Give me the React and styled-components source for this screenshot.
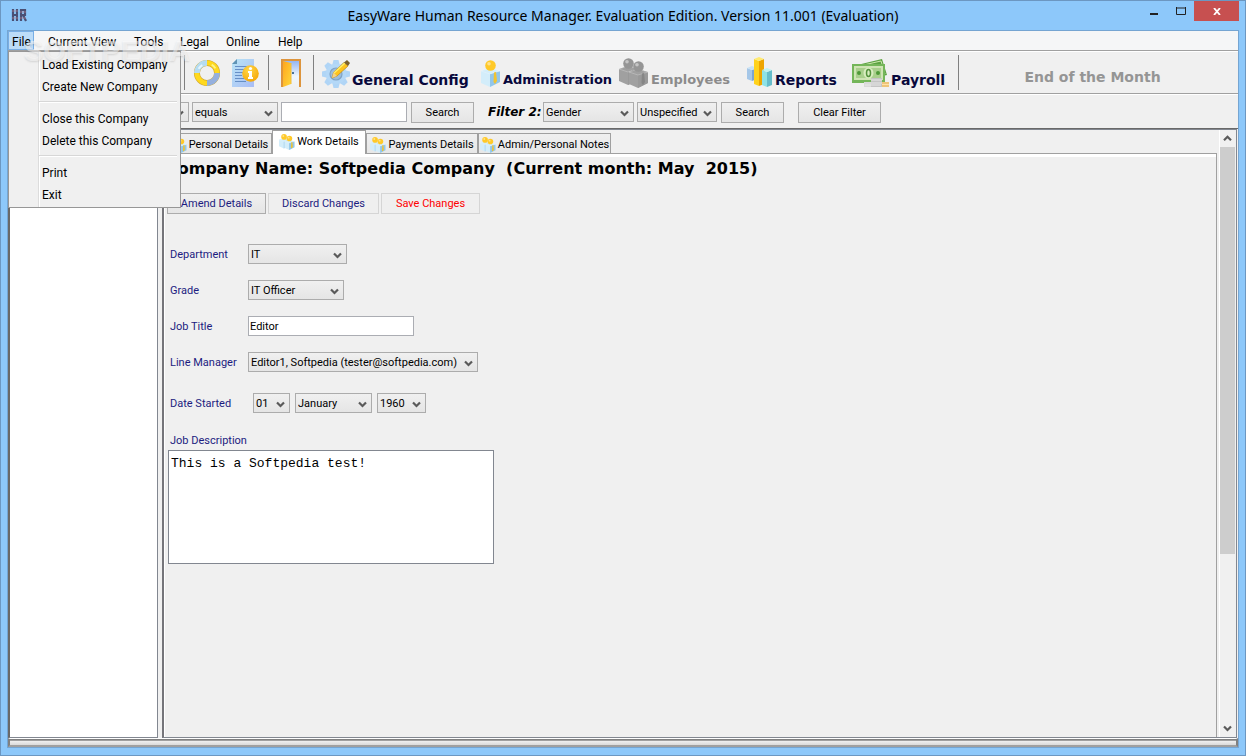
import React from 'react';
import styled, { createGlobalStyle, css } from 'styled-components';

const GlobalStyle = createGlobalStyle`
  * {
    box-sizing: border-box;
  }
  html, body, #root {
    height: 100%;
    margin: 0;
  }
  body {
    font-family: Roboto, "Noto Sans", sans-serif;
    font-size: 11px;
    color: #000;
  }
  button, input, select, textarea {
    font: inherit;
    color: inherit;
    margin: 0;
    border-radius: 0;
  }
`;

/* window frame */

const Window = styled.div`
  display: flex;
  flex-direction: column;
  min-height: 100%;
  padding: 0 6px 7px;
  border: 1px solid #6c97c1;
  background: #8dc8fa;
`;

const TitleBar = styled.header`
  display: grid;
  grid-template-columns: 120px 1fr 120px;
  height: 29px;
  flex: none;
`;

const AppIcon = styled.svg`
  width: 16px;
  height: 14px;
  margin: 7px 0 0 4px;
`;

const WindowTitle = styled.h1`
  margin: 0;
  font-family: "Noto Sans", "Open Sans", sans-serif;
  font-size: 14px;
  font-weight: 400;
  line-height: 30px;
  text-align: center;
  white-space: nowrap;
`;

const Caption = styled.div`
  display: flex;
  justify-content: flex-end;
  align-items: flex-start;
`;

const CaptionButton = styled.button`
  display: flex;
  align-items: center;
  justify-content: center;
  width: ${props => (props.$close ? '45px' : '27px')};
  height: 20px;
  padding: 0;
  border: 0;
  background: ${props => (props.$close ? '#c75050' : 'transparent')};
`;

const Client = styled.div`
  position: relative;
  display: flex;
  flex-direction: column;
  flex: 1;
  border: 1px solid #75a5d2;
  background: #f0f0f0;
`;

/* menu */

const MenuBar = styled.nav`
  position: relative;
  display: flex;
  height: 20px;
  background: #f5f6f7;
  border-bottom: 1px solid #a0a0a0;
  font-size: 12px;
`;

const MenuButton = styled.button`
  width: ${props => props.$width}px;
  height: 19px;
  padding: 1px 0 0 3px;
  border: 1px solid ${props => (props.$open ? '#78aee5' : 'transparent')};
  background: ${props => (props.$open ? '#bcdcf8' : 'transparent')};
  line-height: 18px;
  text-align: left;
  white-space: nowrap;

  &:first-child {
    margin-right: 10px;
  }
`;

const DropMenu = styled.div`
  position: absolute;
  z-index: 2;
  top: 20px;
  left: 0;
  width: 173px;
  padding: 2px 0 1px;
  border: 1px solid #979797;
  background: linear-gradient(90deg, transparent 29px, #dcdcdc 29px, #dcdcdc 30px, #fff 30px, #fff 31px, transparent 31px) #f0f0f0;
  font-size: 12px;
`;

const DropItem = styled.button`
  display: block;
  width: 100%;
  height: 22px;
  padding: 0 0 0 33px;
  border: 0;
  background: transparent;
  line-height: 22px;
  text-align: left;
  white-space: nowrap;
`;

const DropRule = styled.hr`
  height: 2px;
  margin: 3px 3px 5px 30px;
  border: 0;
  border-top: 1px solid #d7d7d7;
  background: #fff;
`;

const Watermark = styled.div`
  position: absolute;
  z-index: 3;
  top: 4px;
  left: 16px;
  color: rgba(255, 255, 255, 0.5);
  font-family: "Liberation Sans", sans-serif;
  font-size: 29px;
  font-weight: 700;
  line-height: 32px;
  text-shadow: 0 1px 2px rgba(100, 100, 100, 0.2);
  pointer-events: none;
`;

/* toolbar */

const Toolbar = styled.div`
  display: flex;
  align-items: center;
  height: 43px;
  padding-left: 176px;
  border-top: 1px solid #fff;
  border-bottom: 1px solid #a0a0a0;
`;

const Divider = styled.i`
  flex: none;
  width: 1px;
  height: 35px;
  margin-right: 8px;
  background: #808080;
`;

const IconButton = styled.button`
  display: flex;
  align-items: center;
  justify-content: center;
  flex: none;
  width: ${props => props.$width}px;
  height: 36px;
  padding: 0;
  border: 0;
  background: transparent;
`;

const ToolButton = styled.button`
  display: flex;
  align-items: flex-end;
  flex: none;
  width: ${props => props.$width}px;
  height: 38px;
  padding: 0 0 3px;
  border: 0;
  background: transparent;
  color: ${props => (props.disabled ? '#8b8b8b' : '#08083c')};
  font-family: "DejaVu Sans", sans-serif;
  font-size: ${props => (props.$small ? '13px' : '14px')};
  font-weight: 700;
  line-height: 18px;
  white-space: nowrap;

  svg {
    flex: none;
    margin-right: 2px;
    margin-bottom: 1px;
  }
`;

const MonthButton = styled.button`
  flex: 1;
  padding: 8px 20px 0 0;
  border: 0;
  background: transparent;
  color: #959595;
  font-family: "DejaVu Sans", sans-serif;
  font-size: 14px;
  font-weight: 700;
`;

/* controls */

const face = css`
  border: 1px solid #acacac;
  background: linear-gradient(#f0f0f0, #e5e5e5);
`;

const SelectBox = styled.span`
  position: relative;
  display: inline-flex;
  flex: none;
  width: ${props => props.$width}px;
  height: 20px;

  select {
    ${face}
    appearance: none;
    width: 100%;
    height: 20px;
    padding: 1px 0 0 2px;
    line-height: 17px;
  }

  svg {
    position: absolute;
    right: 5px;
    top: 8px;
    pointer-events: none;
  }
`;

const TextInput = styled.input`
  width: ${props => props.$width}px;
  height: 20px;
  padding: 0 1px;
  border: 1px solid #abadb3;
  background: #fff;
`;

const Button = styled.button`
  ${face}
  width: ${props => props.$width}px;
  height: 21px;
  padding: 0;
  line-height: 19px;
  white-space: nowrap;
`;

const FilterBar = styled.form`
  display: flex;
  align-items: center;
  height: 34px;
  padding: 1px 0 0 91px;
  border-top: 1px solid #fff;
`;

const FilterGroup = styled.div`
  display: flex;
  align-items: center;
  gap: 3px;
  margin-right: 14px;

  ${Button} {
    margin-left: 1px;
  }
`;

const FilterLabel = styled.strong`
  width: 52px;
  font-family: "DejaVu Sans", sans-serif;
  font-size: 12px;
  font-style: italic;
  white-space: nowrap;
`;

/* body */

const Workspace = styled.main`
  display: flex;
  flex: 1;
  border-top: 1px solid #696969;
`;

const Sidebar = styled.aside`
  flex: none;
  width: 150px;
  border: 1px solid #828790;
  border-left: 2px solid #696969;
  background: #fff;
`;

const Pane = styled.section`
  display: flex;
  flex: 1;
  min-width: 0;
  margin: 0 1px 0 4px;
  border: 1px solid #828790;
  border-left: 2px solid #75757a;
`;

const Content = styled.div`
  display: flex;
  flex-direction: column;
  flex: 1;
  min-width: 0;
  padding-left: 1px;
  border-left: 1px solid #fff;
`;

const TabStrip = styled.div`
  display: flex;
  align-items: flex-end;
  height: 23px;
  padding-left: 1px;
`;

const Tab = styled.button`
  display: flex;
  align-items: center;
  justify-content: center;
  gap: 2px;
  flex: none;
  position: relative;
  width: ${props => props.$width}px;
  height: 20px;
  padding: 2px 0 0;
  border: 1px solid #a0a0a0;
  border-width: 1px 1px 0;
  background: linear-gradient(#f0f0f0, #e7e7e7);
  line-height: 18px;
  white-space: nowrap;

  svg {
    flex: none;
  }

  ${props => props.$active && css`
    height: 24px;
    margin-bottom: -1px;
    padding: 0 0 1px;
    background: #fff;
  `}
`;

const TabPage = styled.div`
  flex: 1;
  padding: 0 0 20px;
  margin-right: 2px;
  border: 1px solid #a0a0a0;
  border-width: 1px 1px 0 0;
  box-shadow: inset 0 3px 0 #fff;
`;

const CompanyTitle = styled.h2`
  margin: 0;
  padding: 3px 0 0;
  font-family: "DejaVu Sans", sans-serif;
  font-size: 16px;
  font-weight: 700;
  line-height: 24px;
  white-space: pre;
`;

const Actions = styled.div`
  display: flex;
  gap: 2px;
  margin: 12px 0 30px 1px;
`;

const ActionButton = styled(Button)`
  color: ${props => (props.$danger ? '#f00' : '#1c1c80')};
  ${props => props.$flat && css`
    border-color: #d5d5d5;
    background: #efefef;
  `}
`;

const Field = styled.div`
  display: flex;
  align-items: center;
  height: 20px;
  margin: 0 0 16px 4px;

  > label {
    width: 78px;
    color: #1c1c80;
  }
`;

const DateField = styled(Field)`
  gap: 5px;
  margin: 21px 0 18px 4px;
`;

const Description = styled.div`
  display: flex;
  flex-direction: column;
  align-items: flex-start;
  margin-left: 2px;

  label {
    padding: 1px 0 0 2px;
    color: #1c1c80;
    line-height: 18px;
  }

  textarea {
    width: 326px;
    height: 114px;
    padding: 5px 2px;
    border: 1px solid #828790;
    background: #fff;
    font-family: "Liberation Mono", monospace;
    font-size: 13px;
    line-height: 15px;
    resize: none;
  }
`;

const ScrollBar = styled.div`
  display: flex;
  flex-direction: column;
  flex: none;
  width: 17px;
  border-left: 1px solid #fff;

  button {
    display: flex;
    align-items: center;
    justify-content: center;
    width: 15px;
    height: 17px;
    padding: 0;
    border: 0;
    background: transparent;
  }
`;

const Track = styled.div`
  flex: 1;
`;

const Thumb = styled.div`
  width: 15px;
  height: 71%;
  background: #cdcdcd;
`;

const StatusBar = styled.footer`
  height: 9px;
  border: 2px solid #808080;
  border-top: 1px solid #fff;
  border-bottom-color: #a0a0a0;
  background: linear-gradient(#808080 1px, #a0a0a0 1px, #a0a0a0 2px, #f0f0f0 2px, #dadada);
`;

/* icons */

const Chevron = ({ up }) => (
  <svg width={9} height={7} viewBox="0 0 9 7">
    <path
      d={up ? 'M1 5.2 4.5 1.7 8 5.2' : 'M1 1.5 4.5 5 8 1.5'}
      fill="none"
      stroke="#5a5a5a"
      strokeWidth="2.2"
    />
  </svg>
);

const RingIcon = () => (
  <svg width={30} height={30} viewBox="0 0 30 30">
    <circle cx="15" cy="15" r="10.800" fill="none" stroke="#d0a630" strokeWidth="6.400" />
    <circle cx="15" cy="15" r="10.800" fill="none" stroke="#ffd91e" strokeWidth="5.200" />
    <g fill="none" strokeWidth="6">
      <path d="M4.200 15A10.800 10.800 0 0 1 15 4.200" stroke="#b5dcf2" />
      <path d="M25.800 15A10.800 10.800 0 0 1 15 25.800" stroke="#95b0de" />
    </g>
    <path d="M6 10.500a10.300 10.300 0 0 1 4-4" fill="none" stroke="#e6f6fd" strokeWidth="2" />
    <path d="M20 6a10.300 10.300 0 0 1 4 4" fill="none" stroke="#fff385" strokeWidth="2" />
  </svg>
);

const ReportIcon = () => (
  <svg width={30} height={32} viewBox="0 0 30 32">
    <defs>
      <linearGradient id="sheet" x1="0" y1="0" x2="1" y2="1">
        <stop offset="0" stopColor="#b9e4f5" />
        <stop offset="1" stopColor="#a9bdf6" />
      </linearGradient>
      <radialGradient id="badge" cx=".4" cy=".3" r=".8">
        <stop offset="0" stopColor="#ffd84a" />
        <stop offset="1" stopColor="#f5a300" />
      </radialGradient>
    </defs>
    <path d="M7 2H24V30H2V7Z" fill="url(#sheet)" />
    <path d="M2 7 7 2V7Z" fill="#5f93b5" />
    <path d="M5 9.500H19M5 12.500H17M5 15.500H13M5 18.500H12M5 21.500H14M5 24.500H16" stroke="#668fc6" />
    <circle cx="20.500" cy="16.500" r="8.300" fill="url(#badge)" />
    <path d="M18 14h4v6h1v2h-5v-2h1v-4h-1z" fill="#fff" />
    <circle cx="20.500" cy="11.500" r="1.600" fill="#fff" />
  </svg>
);

const DoorIcon = () => (
  <svg width={24} height={32} viewBox="0 0 24 32">
    <defs>
      <linearGradient id="sky" x1="0" y1="0" x2="0" y2="1">
        <stop offset="0" stopColor="#8fb2f0" />
        <stop offset=".6" stopColor="#eef6fd" />
        <stop offset="1" stopColor="#f0f0f0" />
      </linearGradient>
      <linearGradient id="leaf" x1="0" y1="0" x2="1" y2="1">
        <stop offset="0" stopColor="#ffa51e" />
        <stop offset="1" stopColor="#ffd83a" />
      </linearGradient>
    </defs>
    <path d="M3 30V3H21V30" fill="url(#sky)" stroke="#dd943c" strokeWidth="2" />
    <path d="M4 4 12 6V27L4 30Z" fill="url(#leaf)" />
    <path d="M12 6V27" stroke="#f0bd3c" />
    <path d="M13 16h2" stroke="#48719a" strokeWidth="2" />
  </svg>
);

const teeth = [0, 45, 90, 135, 180, 225, 270, 315];

const GearIcon = () => (
  <svg width={28} height={30} viewBox="0 0 28 30">
    <g fill="#b0d5f6">
      {teeth.map(angle => (
        <path key={angle} d="M11.500 2h5l1.500 6h-8z" transform={`rotate(${angle} 14 16)`} />
      ))}
    </g>
    <circle cx="14" cy="16" r="10.200" fill="#b4d8f7" />
    <circle cx="14" cy="16" r="6" fill="#9dbddb" stroke="#7fa3c6" strokeWidth="1.200" />
    <path d="M10 20 11.500 14.500 22 4.500 26 8 15 18Z" fill="#ffc31d" stroke="#c78d16" strokeWidth=".7" />
    <path d="M12 15 23 5" stroke="#fff06a" strokeWidth="1.500" />
    <path d="M22 4.500 25 2 28 5 26 8Z" fill="#7b602b" />
    <path d="M10 20 11.500 14.500 15 18Z" fill="#f2d28d" />
  </svg>
);

const Person = ({ x = 0, y = 0, head = '#ffc928', body = '#d3edfa', side = '#92c6ea', tie = '#f0c331' }) => (
  <g transform={`translate(${x} ${y})`}>
    <path d="M0 11 9 8 19 11V22L9 27 0 23Z" fill={body} />
    <path d="M9 14 19 11V22L9 27Z" fill={side} />
    <path d="M0 11 9 8 19 11 9 14Z" fill={body} stroke="#fff" strokeOpacity=".4" strokeWidth=".6" />
    <path d="M13 12.500 15 12 16 21 14 24 12.500 22Z" fill={tie} />
    <circle cx="9.500" cy="5.500" r="5.300" fill={head} />
    <circle cx="8" cy="3.800" r="1.800" fill="#fff" fillOpacity=".45" />
  </g>
);

const AdminIcon = () => (
  <svg width={20} height={28} viewBox="0 0 20 28">
    <Person />
  </svg>
);

const gray = { head: '#959595', body: '#a0a0a0', side: '#999', tie: '#868686' };

const EmployeesIcon = () => (
  <svg width={30} height={30} viewBox="0 0 30 30">
    <Person {...gray} />
    <Person {...gray} x={10} y={3} />
  </svg>
);

const TabIcon = () => (
  <svg width={16} height={16} viewBox="0 0 30 30">
    <Person />
    <Person x={10} y={3} />
  </svg>
);

const bars = [
  { x: 0, y: 11, h: 11, top: '#c6e2f6', left: '#a5c7e8', right: '#7ca5cf' },
  { x: 7, y: 2, h: 25, top: '#ffeb70', left: '#ffd21c', right: '#eea500' },
  { x: 15, y: 13, h: 15, top: '#bff2f2', left: '#8ee2e6', right: '#66bccb' },
];

const ReportsIcon = () => (
  <svg width={26} height={31} viewBox="0 0 26 31">
    {bars.map(bar => (
      <g key={bar.x}>
        <path d={`M${bar.x} ${bar.y}l5 2v${bar.h}l-5-2z`} fill={bar.left} />
        <path d={`M${bar.x + 5} ${bar.y + 2}l5-2v${bar.h}l-5 2z`} fill={bar.right} />
        <path d={`M${bar.x} ${bar.y}l5-2 5 2-5 2z`} fill={bar.top} />
      </g>
    ))}
  </svg>
);

const MoneyIcon = () => (
  <svg width={38} height={30} viewBox="0 0 38 30">
    <path d="M2 8 31 1 36 17 6 24Z" fill="#5da342" />
    <path d="M8 8 30 3 34 16" fill="none" stroke="#cde7ae" />
    <path d="M1 6H34V25H1Z" fill="#74b659" />
    <path d="M3 8H32V22H3Z" fill="#cfe4b4" />
    <path d="M5 10H30V20H5Z" fill="#a9cf8c" />
    <ellipse cx="17.500" cy="15" rx="5" ry="5.500" fill="#d8edbf" />
    <ellipse cx="17.500" cy="15" rx="2" ry="3.500" fill="none" stroke="#54933c" strokeWidth="1.500" />
    <circle cx="8" cy="15" r="2" fill="#4f9938" />
    <circle cx="27" cy="15" r="2" fill="#4f9938" />
    <path d="M13 24h8v5h-8z" fill="#dadada" />
    <path d="M20 20h11v9H20z" fill="#c4c4c4" />
    <path d="M20 22h11M20 25h11M14 27h16" stroke="#e8e8e8" />
    <path d="M31 24h7v5h-7z" fill="#eec47a" />
    <path d="M31 26.500h7" stroke="#ffe2a6" />
  </svg>
);

const menus = [
  { title: 'File', width: 26, open: true },
  { title: 'Current View', width: 86 },
  { title: 'Tools', width: 46 },
  { title: 'Legal', width: 46 },
  { title: 'Online', width: 52 },
  { title: 'Help', width: 40 },
];

const fileMenu = [
  ['Load Existing Company', 'Create New Company'],
  ['Close this Company', 'Delete this Company'],
  ['Print', 'Exit'],
];

const tabs = [
  { title: 'Personal Details', width: 105 },
  { title: 'Work Details', width: 94, active: true },
  { title: 'Payments Details', width: 112 },
  { title: 'Admin/Personal Notes', width: 133 },
];

const Select = ({ id, label, value, width }) => (
  <SelectBox $width={width}>
    <select id={id} aria-label={label} defaultValue={value}>
      <option value={value}>{value}</option>
    </select>
    <Chevron />
  </SelectBox>
);

const FileMenu = () => (
  <DropMenu>
    {fileMenu.map((group, index) => (
      <React.Fragment key={group[0]}>
        {index > 0 && <DropRule />}
        {group.map(item => <DropItem key={item} type="button">{item}</DropItem>)}
      </React.Fragment>
    ))}
  </DropMenu>
);

const MainToolbar = () => (
  <Toolbar>
    <Divider />
    <IconButton $width={28} aria-label="Help"><RingIcon /></IconButton>
    <IconButton $width={47} aria-label="Information"><ReportIcon /></IconButton>
    <Divider />
    <IconButton $width={28} aria-label="Exit"><DoorIcon /></IconButton>
    <IconButton as="span" $width={8} />
    <Divider />
    <ToolButton $width={159}><GearIcon />General Config</ToolButton>
    <ToolButton $width={138} $small><AdminIcon />Administration</ToolButton>
    <ToolButton $width={128} $small disabled><EmployeesIcon />Employees</ToolButton>
    <ToolButton $width={104}><ReportsIcon />Reports</ToolButton>
    <ToolButton $width={107}><MoneyIcon />Payroll</ToolButton>
    <Divider />
    <MonthButton disabled>End of the Month</MonthButton>
  </Toolbar>
);

const Filters = () => (
  <FilterBar onSubmit={event => event.preventDefault()}>
    <FilterGroup>
      <Select label="Filter 1" value="" width={90} />
      <Select label="Condition" value="equals" width={86} />
      <TextInput aria-label="Filter text" $width={126} />
      <Button $width={63}>Search</Button>
    </FilterGroup>
    <FilterGroup>
      <FilterLabel>Filter 2:</FilterLabel>
      <Select label="Filter 2" value="Gender" width={91} />
      <Select label="Filter 2 value" value="Unspecified" width={80} />
      <Button $width={63}>Search</Button>
    </FilterGroup>
    <Button $width={83} type="button">Clear Filter</Button>
  </FilterBar>
);

const WorkDetails = () => (
  <TabPage>
    <CompanyTitle>{'Company Name: Softpedia Company  (Current month: May  2015)'}</CompanyTitle>
    <Actions>
      <ActionButton $width={99}>Amend Details</ActionButton>
      <ActionButton $width={111} $flat>Discard Changes</ActionButton>
      <ActionButton $width={99} $flat $danger>Save Changes</ActionButton>
    </Actions>
    <Field>
      <label htmlFor="department">Department</label>
      <Select id="department" value="IT" width={99} />
    </Field>
    <Field>
      <label htmlFor="grade">Grade</label>
      <Select id="grade" value="IT Officer" width={96} />
    </Field>
    <Field>
      <label htmlFor="job-title">Job Title</label>
      <TextInput id="job-title" defaultValue="Editor" $width={166} />
    </Field>
    <Field>
      <label htmlFor="manager">Line Manager</label>
      <Select id="manager" value="Editor1, Softpedia (tester@softpedia.com)" width={230} />
    </Field>
    <DateField>
      <label htmlFor="day">Date Started</label>
      <Select id="day" value="01" width={37} />
      <Select label="Month started" value="January" width={77} />
      <Select label="Year started" value="1960" width={49} />
    </DateField>
    <Description>
      <label htmlFor="description">Job Description</label>
      <textarea id="description" defaultValue="This is a Softpedia test!" />
    </Description>
  </TabPage>
);

export default function App() {
  return (
    <>
      <GlobalStyle />
      <Window>
        <TitleBar>
          <AppIcon viewBox="0 0 16 14">
            <path d="M2 1V13M6 1V13M2 7H6M10 13V2H14V7H10M12 7 15 13" fill="none" stroke="#4a4f74" strokeWidth="2.200" />
            <path d="M1 3H7M1 10H7M9 4H15M9 10H15" stroke="#b58496" strokeOpacity=".7" />
          </AppIcon>
          <WindowTitle>EasyWare Human Resource Manager. Evaluation Edition. Version 11.001 (Evaluation)</WindowTitle>
          <Caption>
            <CaptionButton aria-label="Minimize">
              <svg width={8} height={10}><path d="M0 8h8" stroke="#222" strokeWidth="2" /></svg>
            </CaptionButton>
            <CaptionButton aria-label="Maximize">
              <svg width={10} height={8}><path d="M.5 0V7.500H9.500V0M0 1H10" fill="none" stroke="#222" /></svg>
            </CaptionButton>
            <CaptionButton $close aria-label="Close">
              <svg width={8} height={7}><path d="M1 0 7 7M7 0 1 7" stroke="#fff" strokeWidth="1.800" /></svg>
            </CaptionButton>
          </Caption>
        </TitleBar>
        <Client>
          <MenuBar>
            {menus.map(menu => (
              <MenuButton key={menu.title} $width={menu.width} $open={menu.open}>
                {menu.title}
              </MenuButton>
            ))}
            <FileMenu />
          </MenuBar>
          <Watermark aria-hidden="true">SOFTPEDIA</Watermark>
          <MainToolbar />
          <Filters />
          <Workspace>
            <Sidebar />
            <Pane>
              <Content>
                <TabStrip>
                  {tabs.map(tab => (
                    <Tab key={tab.title} $width={tab.width} $active={tab.active}>
                      <TabIcon />
                      {tab.title}
                    </Tab>
                  ))}
                </TabStrip>
                <WorkDetails />
              </Content>
              <ScrollBar>
                <button aria-label="Scroll up"><Chevron up /></button>
                <Track><Thumb /></Track>
                <button aria-label="Scroll down"><Chevron /></button>
              </ScrollBar>
            </Pane>
          </Workspace>
          <StatusBar />
        </Client>
      </Window>
    </>
  );
}
